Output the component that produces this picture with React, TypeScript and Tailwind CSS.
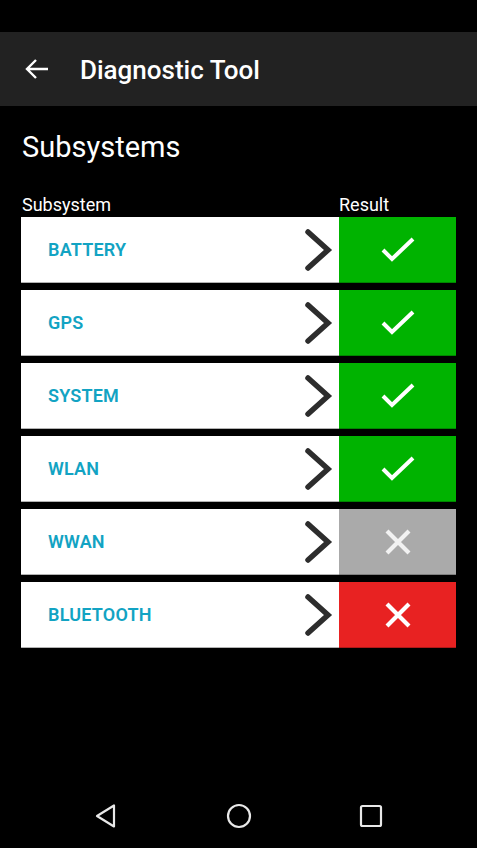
import React from "react";

type Status = "pass" | "skip" | "fail";

const rows: { name: string; status: Status }[] = [
  { name: "BATTERY", status: "pass" },
  { name: "GPS", status: "pass" },
  { name: "SYSTEM", status: "pass" },
  { name: "WLAN", status: "pass" },
  { name: "WWAN", status: "skip" },
  { name: "BLUETOOTH", status: "fail" },
];

function Chevron() {
  return (
    <svg width="30" height="44" viewBox="0 0 30 44" fill="none">
      <path d="M5 4 L25 22 L5 40" stroke="#2d2d2d" strokeWidth="5.5" strokeLinecap="round" strokeLinejoin="miter" />
    </svg>
  );
}

function Check() {
  return (
    <svg width="36" height="28" viewBox="0 0 36 28" fill="none">
      <path d="M3 14 L12 23 L33 3" stroke="#ffffff" strokeWidth="4" />
    </svg>
  );
}

function Cross({ color }: { color: string }) {
  return (
    <svg width="28" height="28" viewBox="0 0 28 28" fill="none">
      <path d="M3 3 L25 25 M25 3 L3 25" stroke={color} strokeWidth="4.2" />
    </svg>
  );
}

function ResultCell({ status }: { status: Status }) {
  if (status === "pass") {
    return (
      <div className="w-[117px] flex items-center justify-center bg-[#00b300] border-b border-black/25">
        <Check />
      </div>
    );
  }
  if (status === "skip") {
    return (
      <div className="w-[117px] flex items-center justify-center bg-[#aaaaaa] border-b border-black/25">
        <Cross color="#f2f2f2" />
      </div>
    );
  }
  return (
    <div className="w-[117px] flex items-center justify-center bg-[#e82222] border-b border-black/25">
      <Cross color="#ffffff" />
    </div>
  );
}

export default function App() {
  return (
    <div
      className="w-[477px] h-[848px] bg-black flex flex-col text-white"
      style={{ fontFamily: "Roboto, 'Noto Sans', sans-serif" }}
    >
      <div className="h-[32px]" />
      <header className="h-[74px] bg-[#222222] flex items-center">
        <div className="w-[80px] flex items-center pl-[24px]">
          <svg width="26" height="24" viewBox="0 0 26 24" fill="none">
            <path d="M24 12 H3 M12 3 L3 12 L12 21" stroke="#ffffff" strokeWidth="2.4" />
          </svg>
        </div>
        <h1 className="text-[26px] font-medium mt-[2px]">Diagnostic Tool</h1>
      </header>

      <main className="flex-1 flex flex-col px-[21px]">
        <h2 className="text-[29px] mt-[24px] leading-[34px] pl-[1px]">Subsystems</h2>
        <div className="flex mt-[30px] text-[18px] leading-[22px]">
          <span className="w-[318px] pl-[1px]">Subsystem</span>
          <span>Result</span>
        </div>
        <div className="flex flex-col gap-[7px] w-[435px] mt-[1px]">
          {rows.map((r) => (
            <div key={r.name} className="flex h-[66px]">
              <div className="flex-1 bg-white flex items-center justify-between border-b border-black/30 pl-[27px] pr-[6px]">
                <span className="text-[#12a3c3] text-[18px] font-semibold tracking-[0.2px]">{r.name}</span>
                <Chevron />
              </div>
              <ResultCell status={r.status} />
            </div>
          ))}
        </div>
      </main>

      <nav className="h-[64px] flex items-center justify-center gap-[106px]">
        <svg width="26" height="26" viewBox="0 0 26 26" fill="none">
          <path d="M20 2.5 L20 23.5 L3 13 Z" stroke="#e8e8e8" strokeWidth="2.2" strokeLinejoin="round" />
        </svg>
        <svg width="26" height="26" viewBox="0 0 26 26" fill="none">
          <circle cx="13" cy="13" r="11" stroke="#e8e8e8" strokeWidth="2.2" />
        </svg>
        <svg width="26" height="26" viewBox="0 0 26 26" fill="none">
          <rect x="3" y="3" width="20" height="20" rx="1.5" stroke="#e8e8e8" strokeWidth="2.2" />
        </svg>
      </nav>
    </div>
  );
}
